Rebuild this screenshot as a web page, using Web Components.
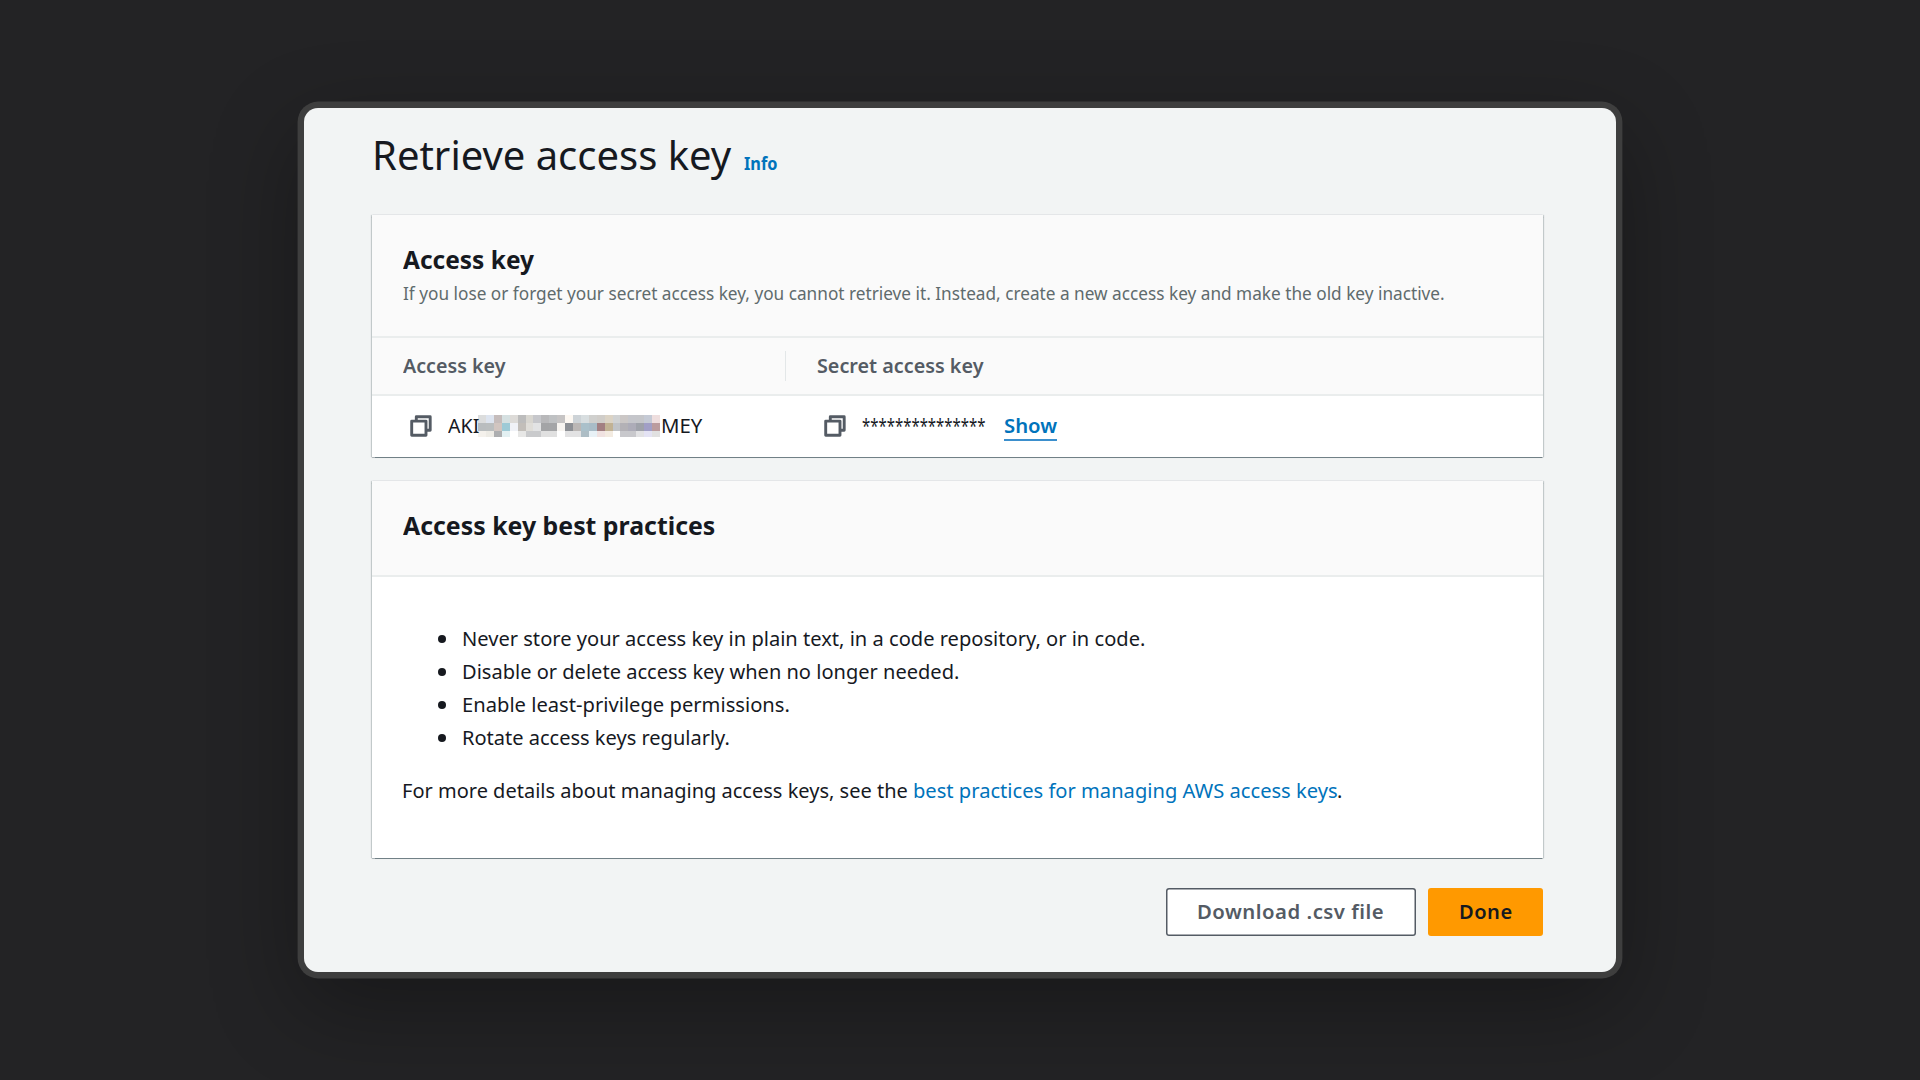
<!DOCTYPE html>
<html lang="en">
<head>
<meta charset="utf-8">
<title>Retrieve access key</title>
<style>
html,body{margin:0;height:100%;overflow:hidden;background:#232325}
body{font-family:"Noto Sans","Open Sans",sans-serif;color:#16191f;font-size:20px}
</style>
</head>
<body>
<access-page></access-page>
<script>
const define=(name,html,init)=>customElements.define(name,class extends HTMLElement{
  connectedCallback(){
    if(this.shadowRoot)return;
    this.attachShadow({mode:'open'}).innerHTML=html;
    if(init)init.call(this,this.shadowRoot);
  }
});

/* One line of text whose ink spans exactly the width in its "w" attribute */
define('fit-text',`<style>
:host{display:inline-block;white-space:nowrap;flex:none}
span{display:inline-block;transform-origin:0 50%}
</style><span></span>`,function(root){
  const span=root.querySelector('span'),w=+this.getAttribute('w'),s=this.getAttribute('s')||20,b=this.getAttribute('b')||400,ls=this.getAttribute('ls')||0;
  const text=this.getAttribute('t');
  span.textContent=text;
  this.style.cssText+=`;width:${w}px;font-size:${s}px;font-weight:${b};letter-spacing:${ls}px;line-height:30px;height:30px`;
  const c=document.createElement('canvas').getContext('2d');
  c.font=`${b} ${s}px "Noto Sans","Open Sans",sans-serif`;
  c.letterSpacing=ls+'px';
  const m=c.measureText(text),left=-m.actualBoundingBoxLeft,ink=m.actualBoundingBoxRight-left;
  const k=w/ink;
  span.style.transform=`translateX(${-left*k}px) scaleX(${k})`;
});

define('copy-icon',`<style>:host{display:block;width:22px;height:22px;flex:none}svg{display:block}</style>
<svg width="22" height="22" viewBox="0 0 22 22" fill="none" stroke="#545b64" stroke-width="2.9" stroke-linejoin="round"><path d="M1.7 6.1H16V20.2H1.7Z"/><path d="M6.3 5.5V1.7H20.2V15.3H16.5"/></svg>`);

/* Pixelated block covering the middle of the key */
define('key-mosaic',`<style>:host{display:grid;grid-template-columns:repeat(23,1fr);grid-template-rows:8px 8px 6px;width:182px;height:22px;flex:none}</style>`,function(root){
  const rows=[
   'dcdddd dde4ef c5bcbb d5e0e1 dddbd8 bcbcbc d8d6d0 c6c7cb b8b8ba bfc1c3 c6c4c4 fdf8f2 cdd3d7 d8dee0 d0d0ce d0cdc9 dbd3c5 d0d2d3 cbc7c6 c5c6cb c5c6ca c5cad5 eedede',
   'b9bdbf babebf d1c5c0 9dcad6 f0f2f7 c2beb9 dfddd8 e2e3e4 a3a4a6 a4a5a7 f7f4f0 8d9095 bbb7b5 aac0ca a9bcc7 a27f82 c1b294 c0c3c7 b3b1b6 adacb8 9fa2aa a19fc6 bb9c9e',
   'f4f1ec edebe5 adaeb0 e3f0f2 ffffff e7e7e6 c9cacc c9cacc e0e0e0 e0e0e0 ffffff e2e2e3 e2e2e3 adbdc5 e8f1f6 f0e2e1 f3ebe1 ffffff c8c8cc c8c8cc e2e2e4 e4e3f4 e1e1e1'];
  root.innerHTML+=rows.join(' ').split(' ').map(c=>`<i style="background:#${c}"></i>`).join('');
});

define('aws-card',`<style>
:host{display:block;background:#fff;box-shadow:1px 0 1px 0 rgba(0,28,36,.16),-1px 0 1px 0 rgba(0,28,36,.16),0 1.4px 1px 0 rgba(0,28,36,.5);box-sizing:border-box}
header{background:#fafafa;border-bottom:2px solid #eaeded;box-sizing:border-box;height:var(--head);padding:29.5px 30px 0 31px;display:flex;flex-direction:column;align-items:flex-start;gap:3.5px}
</style><header><slot name="head"></slot></header><slot></slot>`);

define('key-table',`<style>
:host{display:block}
.r{display:grid;grid-template-columns:414px 1fr;align-items:center;box-sizing:border-box}
.h{height:58.5px;background:#fafafa;border-bottom:2px solid #eaeded;color:#545b64;padding-top:1px}
.d{height:60.5px}
.c{display:flex;align-items:center;padding-left:30.5px}
.h .c{height:30px}
.h .c:first-child{border-right:1.5px solid #e3e7e8}
.d .c{padding-left:37.5px}
.gap{width:16px}
a{display:block;height:30px;color:#0073bb;margin-left:18.5px;box-sizing:border-box;border-bottom:2px solid #3b8fcd}
</style>
<div class="r h"><div class="c"><fit-text t="Access key" w="102.5" b="650"></fit-text></div><div class="c"><fit-text t="Secret access key" w="166.5" b="650"></fit-text></div></div>
<div class="r d"><div class="c"><copy-icon></copy-icon><span class="gap"></span><fit-text t="AKI" w="30.5"></fit-text><key-mosaic></key-mosaic><fit-text t="MEY" w="41" style="margin-left:1.5px"></fit-text></div>
<div class="c"><copy-icon></copy-icon><span class="gap"></span><fit-text t="***************" w="123.5"></fit-text><a><fit-text t="Show" w="53.5" b="650"></fit-text></a></div></div>`);

define('best-practices',`<style>
:host{display:flex;flex-direction:column;padding:45.5px 30px 0 31px}
ul{list-style:none;margin:0;padding:0 0 0 35px}
li{display:flex;align-items:center;gap:17px;height:33px}
li::before{content:"";width:8px;height:8px;border-radius:50%;background:#16191f}
p{margin:21px 0 0;display:flex}
a{display:block;color:#0073bb;margin:0 1.5px 0 6px}
</style>
<ul><li><fit-text t="Never store your access key in plain text, in a code repository, or in code." w="681"></fit-text></li>
<li><fit-text t="Disable or delete access key when no longer needed." w="495"></fit-text></li>
<li><fit-text t="Enable least-privilege permissions." w="325.5"></fit-text></li>
<li><fit-text t="Rotate access keys regularly." w="265.5"></fit-text></li></ul>
<p><fit-text t="For more details about managing access keys, see the" w="504.5"></fit-text><a><fit-text t="best practices for managing AWS access keys" w="423"></fit-text></a><fit-text t="." w="3"></fit-text></p>`);

define('aws-button',`<style>
:host{display:flex;align-items:center;justify-content:center;box-sizing:border-box;height:48px;width:250px;box-shadow:inset 0 0 0 1.5px #545b64;border-radius:3px;background:#fff;color:#545b64}
:host([primary]){width:115px;background:#ff9900;box-shadow:none;color:#16191f}
</style><slot></slot>`);

define('access-page',`<style>
:host{display:flex;height:1080px;align-items:center;justify-content:center}
main{box-sizing:border-box;width:1312.5px;height:864px;border-radius:14px;background:#f2f4f4;box-shadow:0 0 0 6.4px #3e3e3e,0 30px 90px 4px rgba(0,0,0,.32);padding:0 73.5px 0 68.3px;display:flex;flex-direction:column}
.title{display:flex;align-items:baseline;height:107px;padding:32px 0 0 3.3px;box-sizing:border-box;gap:12px}
.title a{color:#0073bb}
.one{--head:122.5px;height:241.5px}
.two{--head:96px;height:377.2px;margin-top:24.8px}
.act{display:flex;justify-content:flex-end;gap:12px;margin-top:29.5px}
</style>
<main>
<div class="title"><fit-text t="Retrieve access key" w="356.5" s="40.5"></fit-text><a><fit-text t="Info" w="33.5" s="17.5" b="700"></fit-text></a></div>
<aws-card class="one"><fit-text slot="head" t="Access key" w="131" s="24.5" b="680"></fit-text><fit-text slot="head" t="If you lose or forget your secret access key, you cannot retrieve it. Instead, create a new access key and make the old key inactive." w="1041" s="17.5" style="color:#5f6b6d"></fit-text><key-table></key-table></aws-card>
<aws-card class="two"><fit-text slot="head" t="Access key best practices" w="312" s="24.5" b="680"></fit-text><best-practices></best-practices></aws-card>
<div class="act"><aws-button><fit-text t="Download .csv file" w="185" b="650" ls="0.5"></fit-text></aws-button><aws-button primary><fit-text t="Done" w="51.5" b="650" ls="0.5"></fit-text></aws-button></div>
</main>`);
</script>
</body>
</html>
